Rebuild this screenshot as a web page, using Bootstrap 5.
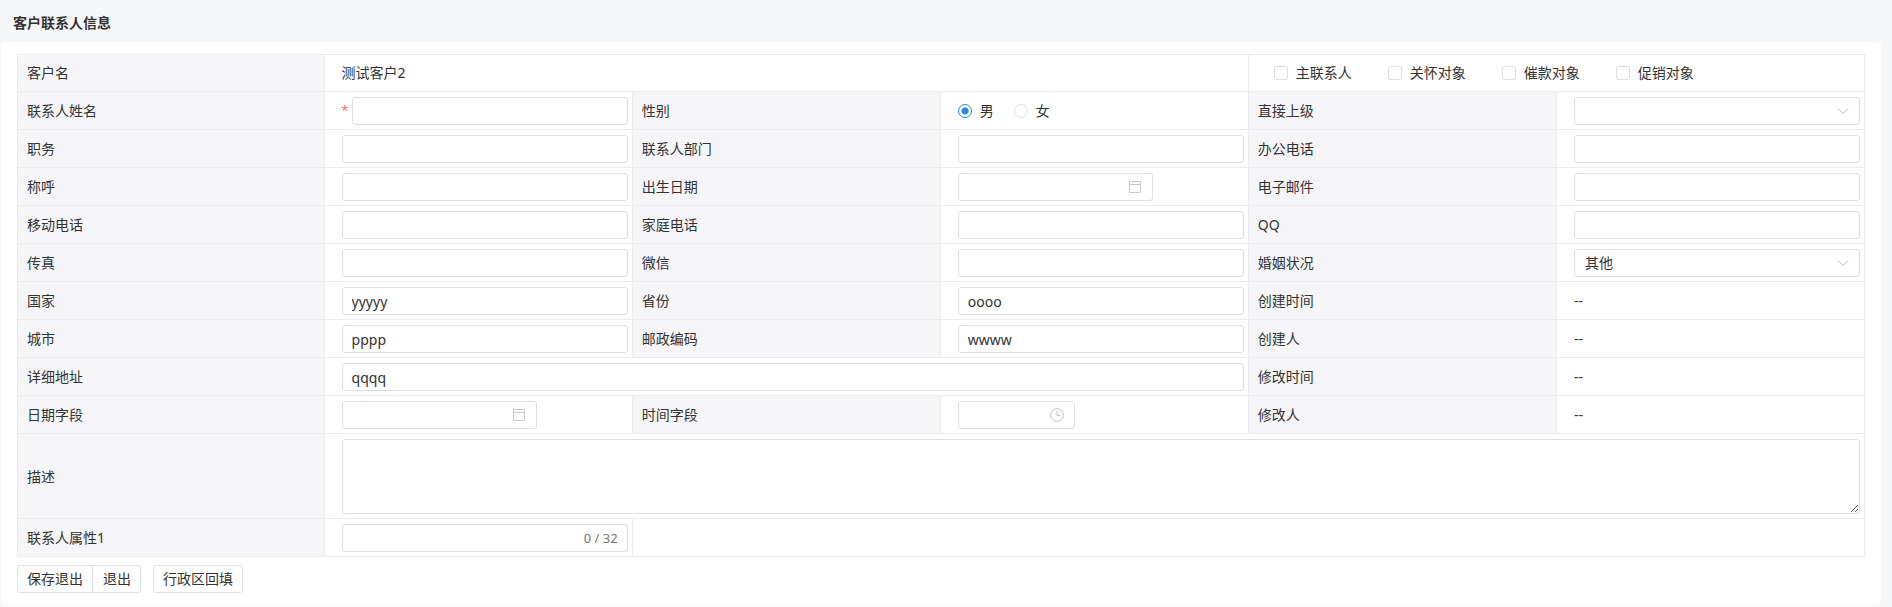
<!DOCTYPE html>
<html lang="zh-CN">
<head>
<meta charset="utf-8">
<meta name="viewport" content="width=device-width, initial-scale=1">
<title>客户联系人信息</title>
<link href="https://cdn.jsdelivr.net/npm/bootstrap@5.3.0/dist/css/bootstrap.min.css" rel="stylesheet">
<style>
  body { background: #f6f7f9; color: #333; font: 14px/20px "Noto Sans", "Noto Sans CJK SC", sans-serif; }
  .page-title { font-size: 14px; line-height: 20px; padding: 13px 13px 9px; }
  .panel { background: #fff; border-radius: 4px; margin: 0 11px 2px 1px; padding: 12px 16px; }
  .info-table { table-layout: fixed; width: 100%; border-collapse: collapse; }
  .info-table .first-col { width: 16.6%; }
  .info-table th, .info-table td { height: 38px; border: 1px solid #ececee; padding: 5px 4px 4px 17px; vertical-align: middle; font-weight: 400; }
  .info-table tr:first-child th, .info-table tr:first-child td { height: 37px; padding-top: 4px; }
  .info-table th { background: #f6f6f9; padding-left: 9px; }
  .info-table .form-control, .info-table .form-select { height: 28px; min-height: 28px; padding: 3px 9px; font-size: 14px; line-height: 20px; color: #333; border: 1px solid #dedfe4; border-radius: 3px; background-color: #fff; }
  .info-table textarea.form-control { height: 75px; display: block; }
  .info-table .form-select { padding-left: 10px; padding-right: 32px; background-image: url("data:image/svg+xml,%3csvg xmlns='http://www.w3.org/2000/svg' viewBox='0 0 12 12'%3e%3cpath fill='none' stroke='%23b8bac0' d='m1 3.5 5 5 5-5'/%3e%3c/svg%3e"); background-size: 12px 12px; background-position: right 10px center; }
  .required-mark { color: #f56c6c; font-size: 12px; width: 10px; line-height: 20px; }
  .with-icon { position: relative; }
  .with-icon svg, .counter { position: absolute; top: 50%; right: 10px; transform: translateY(-50%); pointer-events: none; }
  .with-icon svg { right: 11px; }
  .counter { color: #777; font-size: 13px; }
  .date-box { width: 195px; }
  .time-box { width: 117px; }
  .info-table .form-check-input { width: 14px; height: 14px; margin: 0; float: none; border: 1px solid #dedfe4; }
  .info-table .form-check-input[type=checkbox] { border-radius: 2px; }
  .info-table .form-check-input:checked { border-color: #2a82f0; background-color: #fff; background-image: radial-gradient(circle, #2a82f0 3px, transparent 4px); background-size: 100%; }
  .choice { gap: 8px; }
  .checks { gap: 36px; padding-left: 8px; }
  .radios { gap: 20px; }
  .plain-btn { height: 28px; padding: 3px 9px; font-size: 14px; line-height: 20px; color: #333; background: #fff; border: 1px solid #dedfe4; border-radius: 3px; }
  .btn-group .plain-btn + .plain-btn { padding-left: 10px; }
  .actions { padding-top: 8px; gap: 12px; }
</style>
</head>
<body>
<h1 class="page-title fw-bold mb-0">客户联系人信息</h1>
<main class="panel">
  <form>
    <table class="info-table">
      <colgroup><col class="first-col"><col><col><col><col><col></colgroup>
      <tbody>
        <tr>
          <th scope="row">客户名</th>
          <td colspan="3">测试客户2</td>
          <td colspan="2">
            <div class="d-flex checks">
              <label class="d-flex align-items-center choice"><input class="form-check-input" type="checkbox">主联系人</label>
              <label class="d-flex align-items-center choice"><input class="form-check-input" type="checkbox">关怀对象</label>
              <label class="d-flex align-items-center choice"><input class="form-check-input" type="checkbox">催款对象</label>
              <label class="d-flex align-items-center choice"><input class="form-check-input" type="checkbox">促销对象</label>
            </div>
          </td>
        </tr>
        <tr>
          <th scope="row"><label for="name">联系人姓名</label></th>
          <td><div class="d-flex align-items-center"><span class="required-mark flex-shrink-0">*</span><input id="name" class="form-control" type="text" required></div></td>
          <th scope="row">性别</th>
          <td>
            <div class="d-flex radios">
              <label class="d-flex align-items-center choice"><input class="form-check-input" type="radio" name="gender" checked>男</label>
              <label class="d-flex align-items-center choice"><input class="form-check-input" type="radio" name="gender">女</label>
            </div>
          </td>
          <th scope="row"><label for="superior">直接上级</label></th>
          <td><select id="superior" class="form-select"><option></option></select></td>
        </tr>
        <tr>
          <th scope="row"><label for="post">职务</label></th>
          <td><input id="post" class="form-control" type="text"></td>
          <th scope="row"><label for="dept">联系人部门</label></th>
          <td><input id="dept" class="form-control" type="text"></td>
          <th scope="row"><label for="office-tel">办公电话</label></th>
          <td><input id="office-tel" class="form-control" type="text"></td>
        </tr>
        <tr>
          <th scope="row"><label for="salutation">称呼</label></th>
          <td><input id="salutation" class="form-control" type="text"></td>
          <th scope="row"><label for="birthday">出生日期</label></th>
          <td>
            <div class="with-icon date-box"><input id="birthday" class="form-control" type="text">
              <svg width="14" height="14" viewBox="0 0 14 14" fill="none" stroke="#c8c9cc" aria-hidden="true"><path d="M1.5 1.5h11v11h-11zM1.5 4.5h11"/></svg></div>
          </td>
          <th scope="row"><label for="email">电子邮件</label></th>
          <td><input id="email" class="form-control" type="text"></td>
        </tr>
        <tr>
          <th scope="row"><label for="mobile">移动电话</label></th>
          <td><input id="mobile" class="form-control" type="text"></td>
          <th scope="row"><label for="home-tel">家庭电话</label></th>
          <td><input id="home-tel" class="form-control" type="text"></td>
          <th scope="row"><label for="qq">QQ</label></th>
          <td><input id="qq" class="form-control" type="text"></td>
        </tr>
        <tr>
          <th scope="row"><label for="fax">传真</label></th>
          <td><input id="fax" class="form-control" type="text"></td>
          <th scope="row"><label for="wechat">微信</label></th>
          <td><input id="wechat" class="form-control" type="text"></td>
          <th scope="row"><label for="marital">婚姻状况</label></th>
          <td><select id="marital" class="form-select"><option>其他</option></select></td>
        </tr>
        <tr>
          <th scope="row"><label for="country">国家</label></th>
          <td><input id="country" class="form-control" type="text" value="yyyyy"></td>
          <th scope="row"><label for="province">省份</label></th>
          <td><input id="province" class="form-control" type="text" value="oooo"></td>
          <th scope="row">创建时间</th>
          <td>--</td>
        </tr>
        <tr>
          <th scope="row"><label for="city">城市</label></th>
          <td><input id="city" class="form-control" type="text" value="pppp"></td>
          <th scope="row"><label for="zip">邮政编码</label></th>
          <td><input id="zip" class="form-control" type="text" value="wwww"></td>
          <th scope="row">创建人</th>
          <td>--</td>
        </tr>
        <tr>
          <th scope="row"><label for="address">详细地址</label></th>
          <td colspan="3"><input id="address" class="form-control" type="text" value="qqqq"></td>
          <th scope="row">修改时间</th>
          <td>--</td>
        </tr>
        <tr>
          <th scope="row"><label for="date-field">日期字段</label></th>
          <td>
            <div class="with-icon date-box"><input id="date-field" class="form-control" type="text">
              <svg width="14" height="14" viewBox="0 0 14 14" fill="none" stroke="#c8c9cc" aria-hidden="true"><path d="M1.5 1.5h11v11h-11zM1.5 4.5h11"/></svg></div>
          </td>
          <th scope="row"><label for="time-field">时间字段</label></th>
          <td>
            <div class="with-icon time-box"><input id="time-field" class="form-control" type="text">
              <svg width="14" height="14" viewBox="0 0 14 14" fill="none" stroke="#c0c1c4" aria-hidden="true"><circle cx="7" cy="7" r="6.3"/><path d="M7 3v4.5h3"/></svg></div>
          </td>
          <th scope="row">修改人</th>
          <td>--</td>
        </tr>
        <tr>
          <th scope="row"><label for="description">描述</label></th>
          <td colspan="5"><textarea id="description" class="form-control"></textarea></td>
        </tr>
        <tr>
          <th scope="row"><label for="attr">联系人属性1</label></th>
          <td><div class="with-icon"><input id="attr" class="form-control" type="text" maxlength="32"><span class="counter">0 / 32</span></div></td>
          <td colspan="4"></td>
        </tr>
      </tbody>
    </table>
    <div class="d-flex actions">
      <div class="btn-group">
        <button type="button" class="btn plain-btn">保存退出</button>
        <button type="button" class="btn plain-btn">退出</button>
      </div>
      <button type="button" class="btn plain-btn">行政区回填</button>
    </div>
  </form>
</main>
<script src="https://cdn.jsdelivr.net/npm/bootstrap@5.3.0/dist/js/bootstrap.bundle.min.js"></script>
</body>
</html>
